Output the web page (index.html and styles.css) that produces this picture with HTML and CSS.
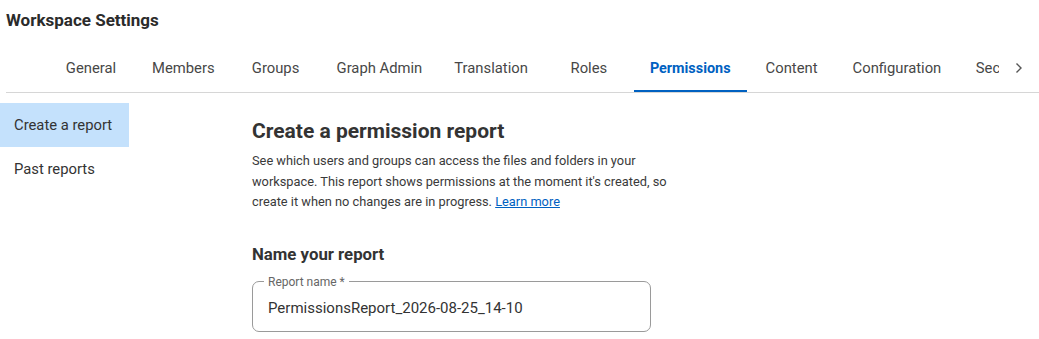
FILE: index.html
```html
<!DOCTYPE html>
<html lang="en">
<head>
<meta charset="utf-8">
<title>Workspace Settings</title>
<link rel="stylesheet" href="styles.css">
</head>
<body>
<header class="header">
  <h1 class="title">Workspace Settings</h1>
  <nav class="tabbar">
    <div class="tab-spacer"></div>
    <div class="tab-scroller">
      <a class="tab">General</a>
      <a class="tab">Members</a>
      <a class="tab">Groups</a>
      <a class="tab">Graph Admin</a>
      <a class="tab">Translation</a>
      <a class="tab">Roles</a>
      <a class="tab tab-active">Permissions</a>
      <a class="tab">Content</a>
      <a class="tab">Configuration</a>
      <a class="tab">Security</a>
    </div>
    <button class="tab-scroll" aria-label="Scroll right">
      <svg width="8" height="12" viewBox="0 0 8 12"><path d="M1.5 1.5 L6 6 L1.5 10.5" fill="none" stroke="#555" stroke-width="1.4"/></svg>
    </button>
  </nav>
</header>
<div class="layout">
  <aside class="sidenav">
    <a class="sidenav-item sidenav-active">Create a report</a>
    <a class="sidenav-item">Past reports</a>
  </aside>
  <main class="content">
    <h2 class="heading">Create a permission report</h2>
    <p class="desc">See which users and groups can access the files and folders in your workspace. This report shows permissions at the moment it's created, so create it when no changes are in progress. <a class="link" href="#">Learn more</a></p>
    <h3 class="subheading">Name your report</h3>
    <fieldset class="field">
      <legend class="field-label">Report name *</legend>
      <input class="field-input" type="text" value="PermissionsReport_2026-08-25_14-10" readonly>
    </fieldset>
  </main>
</div>
</body>
</html>
```

FILE: styles.css
```css
* { box-sizing: border-box; }
html, body { margin: 0; padding: 0; background: #fff; }
body {
  font-family: Roboto, "Liberation Sans", sans-serif;
  color: #333;
  width: 1039px;
  height: 339px;
  overflow: hidden;
}
.header { padding-left: 6px; }
.title {
  margin: 0;
  padding: 8px 0 12px;
  font-size: 17px;
  line-height: 24px;
  font-weight: 700;
  color: #2b2b2b;
}
.tabbar {
  display: flex;
  border-bottom: 1px solid #d6d6d6;
  height: 49px;
}
.tab-spacer { width: 40px; flex-shrink: 0; }
.tab-scroller {
  flex: 1;
  display: flex;
  overflow: hidden;
  min-width: 0;
}
.tab {
  flex-shrink: 0;
  min-width: 90px;
  height: 48px;
  padding: 2px 16px 0;
  display: flex;
  align-items: center;
  justify-content: center;
  font-size: 14.8px;
  color: #474747;
  border-bottom: 2px solid transparent;
  white-space: nowrap;
}
.tab-active {
  color: #0061c1;
  font-weight: 700;
  font-size: 14.4px;
  border-bottom-color: #0061c1;
}
.tab-scroll {
  width: 40px;
  height: 48px;
  flex-shrink: 0;
  border: 0;
  background: transparent;
  padding: 0;
  display: flex;
  align-items: center;
  justify-content: center;
}
.layout {
  display: grid;
  grid-template-columns: 129px 1fr;
  column-gap: 123px;
  padding-top: 10px;
}
.sidenav { display: flex; flex-direction: column; }
.sidenav-item {
  height: 44px;
  display: flex;
  align-items: center;
  padding-left: 14px;
  font-size: 14.8px;
  color: #333;
}
.sidenav-active { background: #c4e1fc; }
.content { padding-top: 15px; }
.heading {
  margin: 0;
  font-size: 21px;
  line-height: 26px;
  font-weight: 700;
  color: #333;
}
.desc {
  margin: 7px 0 0;
  width: 426px;
  font-size: 12.8px;
  line-height: 20.5px;
  color: #3a3a3a;
}
.link { color: #0061c1; text-decoration: underline; }
.subheading {
  margin: 30px 0 0;
  font-size: 16.8px;
  line-height: 22px;
  font-weight: 700;
  color: #333;
}
.field {
  margin: 10px 0 0;
  width: 399px;
  padding: 0 15px 4px;
  border: 1px solid #9a9a9a;
  border-radius: 7px;
}
.field-label {
  margin-left: -4px;
  padding: 0 4px;
  font-size: 12px;
  line-height: 14px;
  color: #666;
}
.field-input {
  display: block;
  width: 100%;
  height: 38px;
  border: 0;
  padding: 0;
  margin: 0;
  font-family: inherit;
  font-size: 15px;
  color: #333;
  background: transparent;
  outline: none;
}
```
